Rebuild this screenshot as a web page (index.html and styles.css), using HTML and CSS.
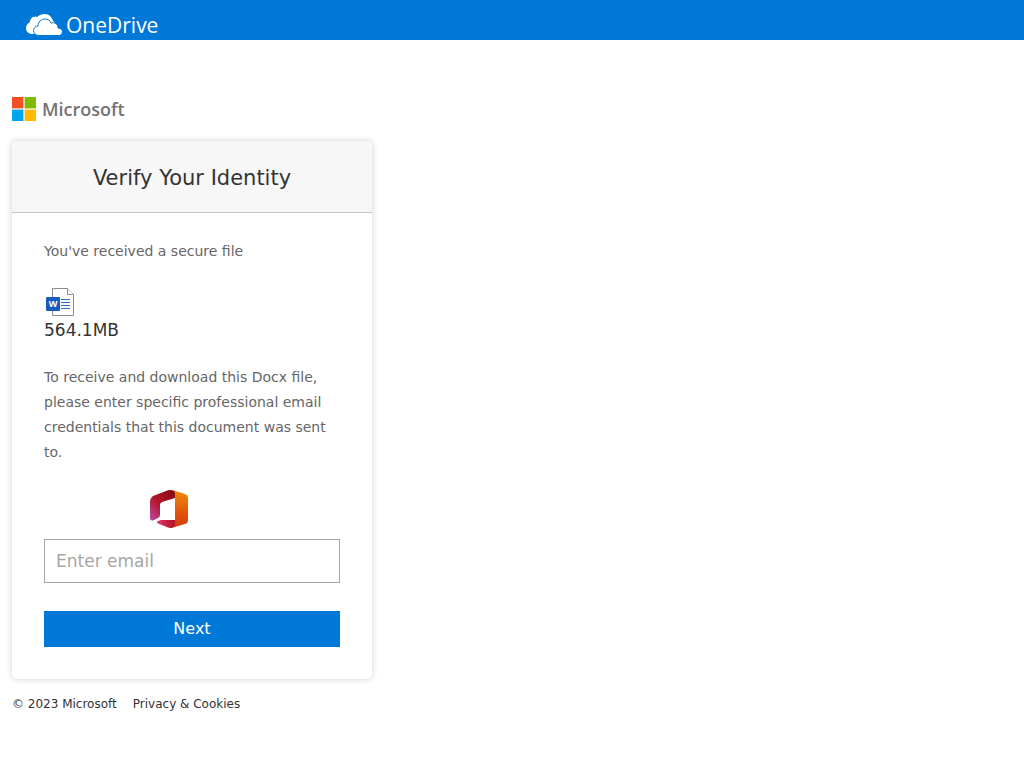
FILE: index.html
```html
<!DOCTYPE html>
<html lang="en">
<head>
<meta charset="utf-8">
<meta name="viewport" content="width=device-width, initial-scale=1">
<title>Verify Your Identity</title>
<link rel="stylesheet" href="styles.css">
</head>
<body>
<header class="topbar">
  <svg class="cloud" viewBox="0 0 36 22" aria-hidden="true">
    <path fill="#fff" d="M7 20C3 20 0 18 0 14c0-3 2-5 4-6 0-4 3-6 7-5C13 1 16 0 19 0c4 0 7 3 8 7 2 1 3 3 3 5L14 20z"/>
    <path fill="#fff" stroke="#0078d7" stroke-width="1" d="M13 21.500c-3 0-5.500-2-5.500-5 0-2.500 2-4.500 4.500-4.500 0-4 3-7 7-7 3 0 5 1 6 4 4-1 7 1 7 5 3 0 4.500 2 4.500 4s-2 3.500-4.500 3.500z"/>
  </svg>
  <span class="product">OneDrive</span>
</header>
<main class="page">
  <div class="brand">
    <svg class="squares" viewBox="0 0 24 24" aria-hidden="true">
      <path fill="#f25022" d="M0 0h11.4v11.4H0z"/><path fill="#7fba00" d="M12.6 0H24v11.4H12.6z"/>
      <path fill="#00a4ef" d="M0 12.6h11.4V24H0z"/><path fill="#ffb900" d="M12.6 12.6H24V24H12.6z"/>
    </svg>
    <span class="brand-name">Microsoft</span>
  </div>
  <section class="card">
    <h1 class="card-title">Verify Your Identity</h1>
    <div class="card-body">
      <p class="note">You've received a secure file</p>
      <div class="file">
        <div class="file-icon">
          <svg class="sheet" viewBox="0 0 28 28" aria-hidden="true">
            <path fill="#fff" stroke="#8c8c8c" d="M6.500 .5h15l6 6v21h-21z"/>
            <path fill="#fff" stroke="#8c8c8c" d="M21.500 .5v6h6"/>
            <path stroke="#2b6cc4" d="M15 11.500h9M15 14.500h9M15 17.500h9M15 20.500h9"/>
            <rect y="9" width="14" height="14" rx="1" fill="#185abd"/>
          </svg>
          <span class="letter">W</span>
        </div>
        <span class="file-size">564.1MB</span>
      </div>
      <p class="note">To receive and download this Docx file, please enter specific professional email credentials that this document was sent to.</p>
      <svg class="office" viewBox="0 0 38 38" aria-hidden="true">
        <defs>
          <linearGradient id="left" x1="1" y1="0" x2="0" y2="1"><stop offset="0" stop-color="#7d0a10"/><stop offset=".55" stop-color="#b5152b"/><stop offset="1" stop-color="#b84bb0"/></linearGradient>
          <linearGradient id="right" x1="0" y1="0" x2="0" y2="1"><stop offset="0" stop-color="#f08a0c"/><stop offset=".6" stop-color="#e2560c"/><stop offset="1" stop-color="#d13a08"/></linearGradient>
          <linearGradient id="base"><stop offset="0" stop-color="#e03a6c"/><stop offset="1" stop-color="#b00d1e"/></linearGradient>
        </defs>
        <path fill="url(#base)" d="M8 31 11 30h15v6l-4 2q-2 0-4-.5l-10-4q-2-1.500 0-2.500z"/>
        <path fill="url(#right)" d="M20 0q2 0 4 .5L35 4q3 1 3 4v22q0 3-3 4l-12 3.600Q22 38 20 38l5-2V6z"/>
        <path fill="url(#left)" d="M25 3v5l-13 4q-2 1-2 3v10q0 2-2 3l-5 2.500Q0 31 0 28V11Q0 8 3 6L16 .9Q20-.8 24 1z"/>
      </svg>
      <input class="email" type="email" placeholder="Enter email" aria-label="Email" autocomplete="off" readonly>
      <button class="next" type="button">Next</button>
    </div>
  </section>
  <footer class="footer"><span>© 2023 Microsoft</span><a class="footer-link" href="#">Privacy &amp; Cookies</a></footer>
</main>
</body>
</html>
```
FILE: styles.css
```css
* { box-sizing: border-box; }
body {
  margin: 0;
  background: #fff;
  color: #333;
  font-family: "DejaVu Sans", sans-serif;
}
.topbar {
  display: flex;
  align-items: center;
  gap: 4px;
  height: 40px;
  padding: 10px 26px 0;
  background: #0078d7;
}
.cloud { width: 36px; height: 22px; }
.product {
  color: #fff;
  font: 400 21px/28px "Open Sans", sans-serif;
}
.page { padding: 56px 12px 24px; }
.brand {
  display: flex;
  align-items: center;
  gap: 6px;
  height: 26px;
  margin-bottom: 19px;
}
.squares { width: 24px; height: 24px; }
.brand-name {
  color: #737373;
  font: 600 18px/24px "Open Sans", sans-serif;
}
.card {
  max-width: 360px;
  border-radius: 5px;
  box-shadow: 0 0 6px rgba(0, 0, 0, .2);
  overflow: hidden;
}
.card-title {
  margin: 0;
  padding: 22px 32px 18px;
  border-bottom: 1px solid #c4c4c4;
  background: #f7f7f7;
  font-size: 21px;
  font-weight: 400;
  line-height: 31px;
  text-align: center;
}
.card-body {
  display: flex;
  flex-direction: column;
  padding: 26px 32px 32px;
}
.note {
  margin: 0;
  color: #666;
  font-size: 14px;
  line-height: 25px;
}
.file { margin: 24px 0 20px; }
.file-icon {
  position: relative;
  width: 28px;
  height: 28px;
  margin-left: 2px;
}
.sheet { display: block; width: 28px; height: 28px; }
.letter {
  position: absolute;
  left: 0;
  top: 9px;
  width: 14px;
  color: #fff;
  font: 700 9px/14px "Open Sans", sans-serif;
  text-align: center;
}
.file-size {
  display: block;
  font-size: 17px;
  line-height: 29px;
}
.office {
  width: 38px;
  height: 38px;
  margin: 25px 0 11px 106px;
}
.email {
  width: 100%;
  height: 44px;
  padding: 0 11px;
  border: 1px solid #a6a6a6;
  border-radius: 0;
  background: #fff;
  color: #333;
  font: 17px "DejaVu Sans", sans-serif;
}
.email::placeholder { color: #a6a6a6; }
.next {
  height: 36px;
  margin-top: 28px;
  padding: 0 6px 2px;
  border: 0;
  background: #0078d7;
  color: #fff;
  font: 16px "DejaVu Sans", sans-serif;
}
.footer {
  display: flex;
  gap: 16px;
  margin-top: 16px;
  font-size: 12px;
  line-height: 18px;
}
.footer-link { color: #333; text-decoration: none; }
```
